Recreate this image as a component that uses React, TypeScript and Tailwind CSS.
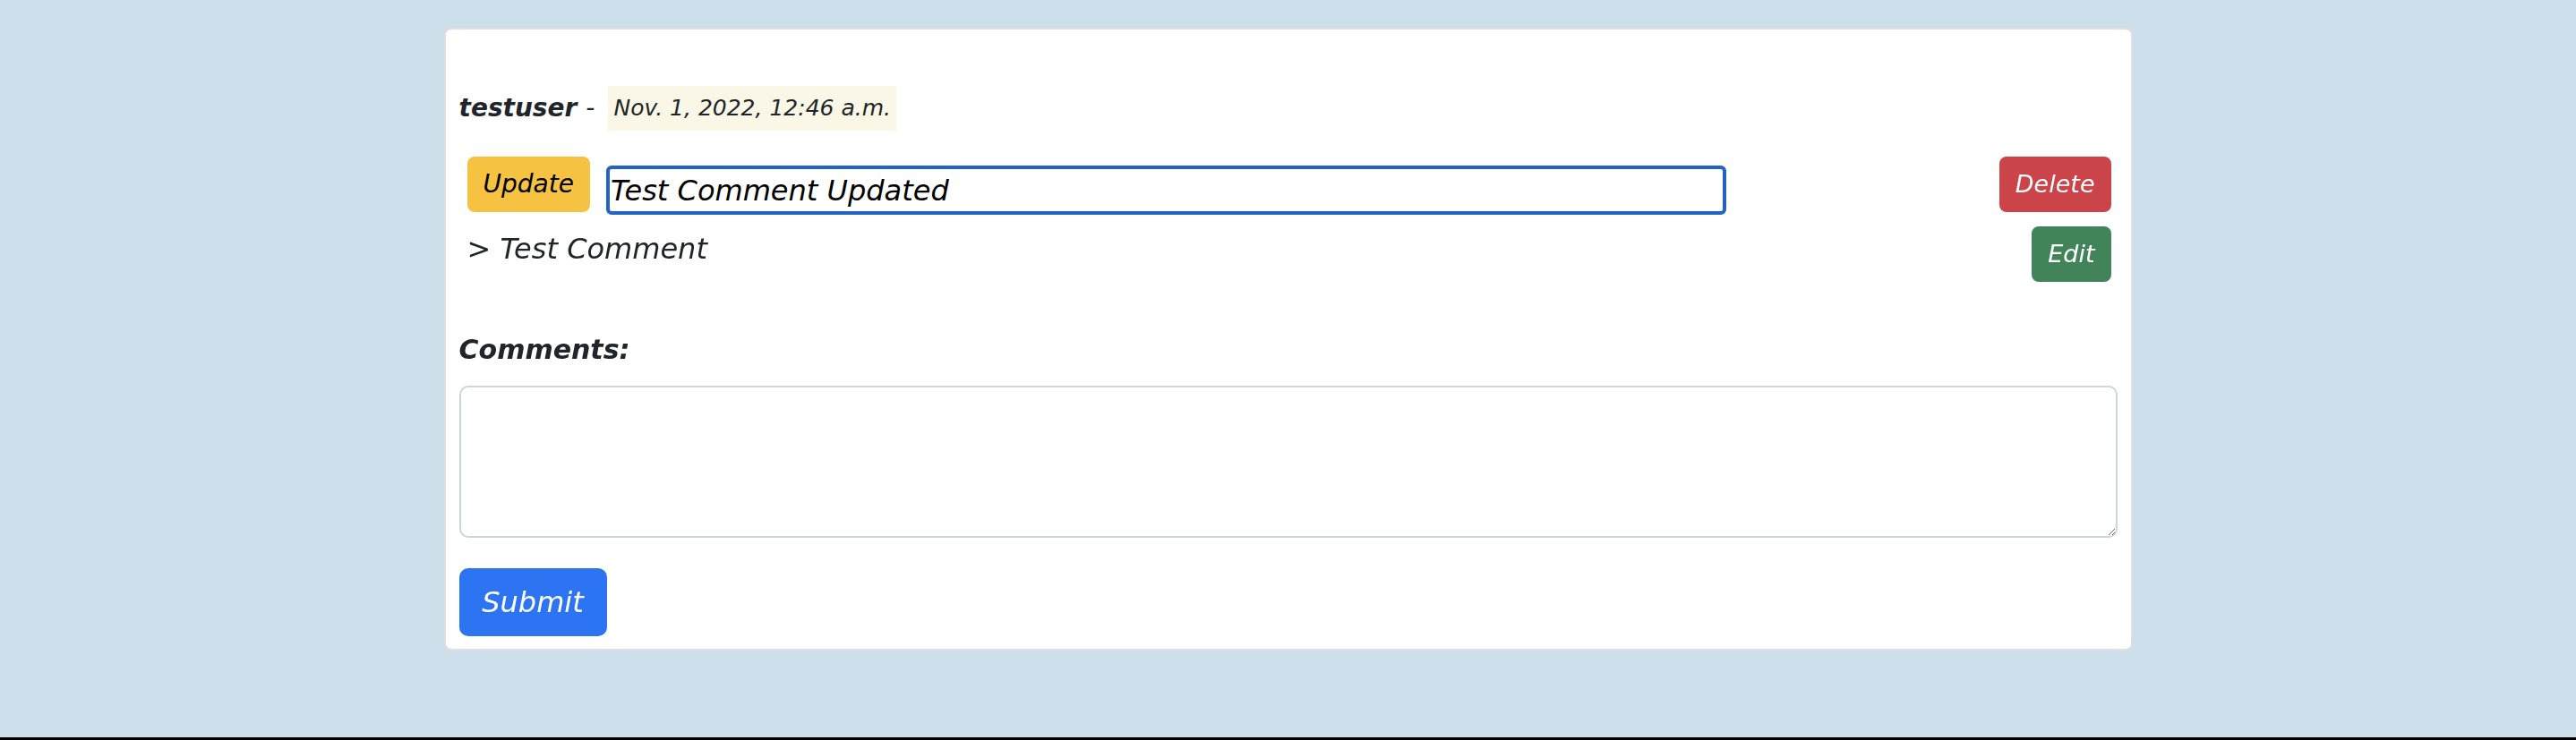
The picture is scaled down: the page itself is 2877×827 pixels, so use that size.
import { useState } from 'react';

export default function App() {
  const [draft, setDraft] = useState('Test Comment Updated');
  const [comment, setComment] = useState('');

  return (
    <div className="min-h-[827px] flex flex-col bg-[#cddfea] font-['DejaVu_Sans',sans-serif] italic text-[#212529]">
      <main className="h-[824px]">
        {/* Comment card */}
        <div className="mx-auto mt-[31px] w-[1886px] bg-white border-2 border-[#dfdfdf] rounded-[8px] px-[15px] pt-[62px] pb-[14px]">
          {/* Author + date */}
          <div className="flex items-center h-[51px]">
            <span className="text-[28px] font-bold">testuser</span>
            <span className="text-[28px] ml-[10px] mr-[15px]">-</span>
            <span className="h-[50px] flex items-center px-[6px] bg-[#faf7e6] text-[25px]">
              Nov. 1, 2022, 12:46 a.m.
            </span>
          </div>

          {/* Update form + actions */}
          <div className="flex justify-between mt-[29px]">
            <div className="flex-1 flex flex-col pl-[9px]">
              <form className="flex items-start gap-[18px]" onSubmit={(e) => e.preventDefault()}>
                <button
                  type="submit"
                  className="h-[62px] px-[16px] bg-[#f5c242] border-2 border-[#f5c242] rounded-[8px] text-[28px] leading-[42px] text-black italic"
                >
                  Update
                </button>
                <input
                  autoFocus
                  value={draft}
                  onChange={(e) => setDraft(e.target.value)}
                  onFocus={(e) => {
                    const n = e.target.value.length;
                    e.target.setSelectionRange(n, n);
                  }}
                  className="mt-[10px] w-[1251px] h-[55px] border-[4px] border-[#2363c4] rounded-[6px] px-[1px] text-[32px] text-black italic outline-none"
                />
              </form>
              <div className="mt-[14px] text-[32px] leading-[48px]">&gt; Test Comment</div>
            </div>
            <div className="flex flex-col items-end gap-[16px] pr-[7px]">
              <button className="h-[62px] px-[16px] bg-[#cb444a] border-2 border-[#cb444a] rounded-[8px] text-[27px] leading-[42px] text-white italic">
                Delete
              </button>
              <button className="h-[62px] px-[16px] bg-[#42845a] border-2 border-[#42845a] rounded-[8px] text-[27px] leading-[42px] text-white italic">
                Edit
              </button>
            </div>
          </div>

          {/* New comment */}
          <div className="mt-[52px]">
            <label className="block text-[30px] leading-[48px] font-semibold">Comments:</label>
            <textarea
              value={comment}
              onChange={(e) => setComment(e.target.value)}
              className="block mt-[16px] w-full h-[170px] border-2 border-[#ced4da] rounded-[10px] px-[24px] py-[12px] text-[32px] outline-none"
            />
            <button className="mt-[34px] h-[76px] w-[165px] bg-[#2d74f2] border-2 border-[#2d74f2] rounded-[10px] text-[32px] leading-[48px] text-white italic">
              Submit
            </button>
          </div>
        </div>
      </main>
      <div className="h-[3px] bg-black" />
    </div>
  );
}
